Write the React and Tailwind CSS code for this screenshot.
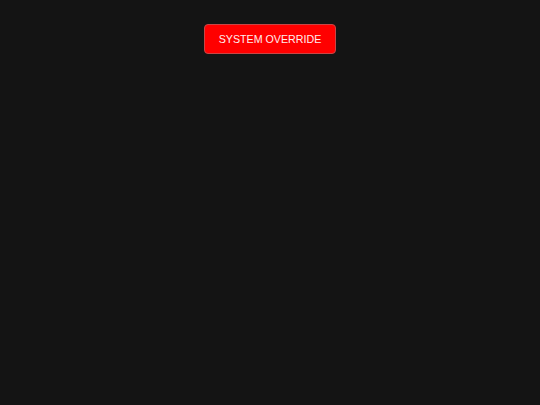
import React from 'react';

const App = () => {
  return (
    <div className="min-h-screen w-full bg-[#141414] flex justify-center pt-6 font-['Liberation_Sans',Arial,sans-serif]">
      <div>
        <button className="h-[30px] w-[132px] rounded-[4px] border border-[#c84646] bg-[#ff0000] text-[10.7px] text-[#ffeeee]">
          SYSTEM OVERRIDE
        </button>
      </div>
    </div>
  );
};

export default App;
